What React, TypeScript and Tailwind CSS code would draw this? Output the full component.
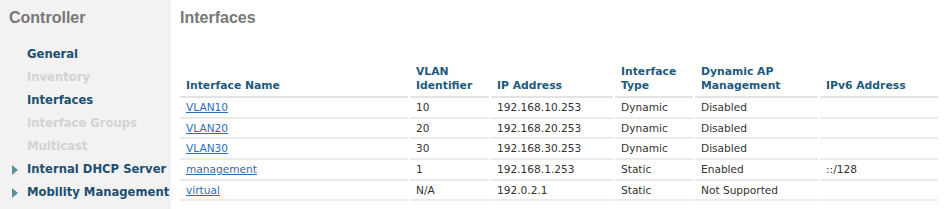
import React from 'react';

type Row = {
  name: string;
  vlan: string;
  ip: string;
  type: string;
  apMgmt: string;
  ipv6: string;
};

const rows: Row[] = [
  { name: 'VLAN10', vlan: '10', ip: '192.168.10.253', type: 'Dynamic', apMgmt: 'Disabled', ipv6: '' },
  { name: 'VLAN20', vlan: '20', ip: '192.168.20.253', type: 'Dynamic', apMgmt: 'Disabled', ipv6: '' },
  { name: 'VLAN30', vlan: '30', ip: '192.168.30.253', type: 'Dynamic', apMgmt: 'Disabled', ipv6: '' },
  { name: 'management', vlan: '1', ip: '192.168.1.253', type: 'Static', apMgmt: 'Enabled', ipv6: '::/128' },
  { name: 'virtual', vlan: 'N/A', ip: '192.0.2.1', type: 'Static', apMgmt: 'Not Supported', ipv6: '' },
];

const navItems: { label: string; disabled?: boolean; expandable?: boolean }[] = [
  { label: 'General' },
  { label: 'Inventory', disabled: true },
  { label: 'Interfaces' },
  { label: 'Interface Groups', disabled: true },
  { label: 'Multicast', disabled: true },
  { label: 'Internal DHCP Server', expandable: true },
  { label: 'Mobility Management', expandable: true },
];

// Small teal triangle used for expandable menu entries
const Caret = () => (
  <svg width="6" height="10" viewBox="0 0 6 10" className="shrink-0">
    <path d="M0 0 L6 5 L0 10 Z" fill="#5f8f93" />
  </svg>
);

const Sidebar = () => (
  <aside className="w-[171px] shrink-0 bg-[#f2f2f2] pt-[8px]">
    <h2 className="pl-[9px] text-[16px] font-bold leading-[20px] text-[#777777] font-['Liberation_Sans',Arial,sans-serif]">
      Controller
    </h2>
    <ul className="mt-[15px] font-['DejaVu_Sans',Verdana,sans-serif] text-[11.6px] font-bold">
      {navItems.map((item) => (
        <li key={item.label} className="flex h-[23.1px] items-center">
          <span className="flex w-[27px] justify-center pl-[2px]">
            {item.expandable && <Caret />}
          </span>
          <span className={item.disabled ? 'text-[#d2d2d2]' : 'text-[#1d4f6e]'}>
            {item.label}
          </span>
        </li>
      ))}
    </ul>
  </aside>
);

const headers = [
  { label: 'Interface Name', w: 'w-[228px]' },
  { label: 'VLAN Identifier', w: 'w-[79px]' },
  { label: 'IP Address', w: 'w-[122px]' },
  { label: 'Interface Type', w: 'w-[78px]' },
  { label: 'Dynamic AP Management', w: 'w-[123px]' },
  { label: 'IPv6 Address', w: 'w-[118px]' },
];

const headerBreaks: Record<string, React.ReactNode> = {
  'VLAN Identifier': (
    <>
      VLAN
      <br />
      Identifier
    </>
  ),
  'Interface Type': (
    <>
      Interface
      <br />
      Type
    </>
  ),
  'Dynamic AP Management': (
    <>
      Dynamic AP
      <br />
      Management
    </>
  ),
};

const App: React.FC = () => {
  const cell = 'border-b-2 border-[#ebebeb] px-[6px] h-[20.7px] pt-[1px] pb-0 align-middle';

  return (
    <div className="flex h-[209px] w-[945px] overflow-hidden bg-white">
      <Sidebar />

      <main className="flex-1 pl-[9px] pt-[8px]">
        <h1 className="text-[16px] font-bold leading-[20px] text-[#777777] font-['Liberation_Sans',Arial,sans-serif]">
          Interfaces
        </h1>

        <table className="mt-[37px] w-[762px] table-fixed border-separate border-spacing-x-[2px] border-spacing-y-0 -ml-[2px] font-['DejaVu_Sans',Verdana,sans-serif] text-[10.6px] text-[#333333]">
          <thead>
            <tr>
              {headers.map((h) => (
                <th
                  key={h.label}
                  className={`${h.w} border-b-2 border-[#e3e3e3] px-[6px] pb-[3px] text-left align-bottom text-[10.8px] font-bold leading-[14px] text-[#1d5a7e]`}
                >
                  {headerBreaks[h.label] ?? h.label}
                </th>
              ))}
            </tr>
          </thead>
          <tbody>
            {rows.map((r) => (
              <tr key={r.name}>
                <td className={cell}>
                  <a href="#" className="text-[#2a6ebb] underline">
                    {r.name}
                  </a>
                </td>
                <td className={cell}>{r.vlan}</td>
                <td className={cell}>{r.ip}</td>
                <td className={cell}>{r.type}</td>
                <td className={cell}>{r.apMgmt}</td>
                <td className={cell}>{r.ipv6}</td>
              </tr>
            ))}
          </tbody>
        </table>
      </main>
    </div>
  );
};

export default App;
